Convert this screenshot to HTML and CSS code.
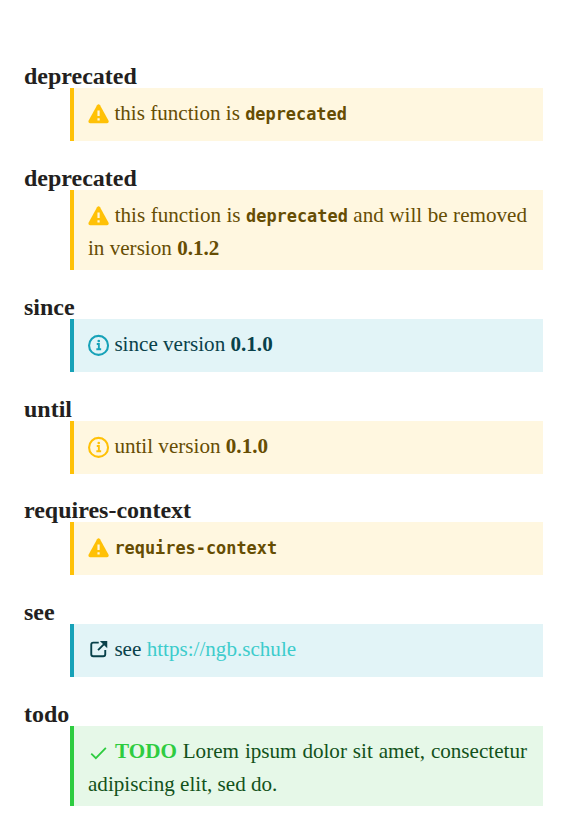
FILE: index.html
```
<!DOCTYPE html>
<html lang="en">
<head>
<meta charset="utf-8">
<title>Tags</title>
<link rel="stylesheet" href="styles.css">
</head>
<body>
<svg class="defs" width="0" height="0">
  <symbol id="warn" viewBox="0 0 21 36"><path d="M9 8.1Q10.5 6 12 8.1L20.4 23.4Q21.2 25.7 19 26H2Q-.2 25.7.6 23.4Z" fill="currentColor"/><path d="M10.5 13.2v5.6M10.5 21v2.2" stroke="#fff7e0" stroke-width="2.2"/></symbol>
  <symbol id="info" viewBox="0 0 21 36"><circle cx="10.5" cy="17.2" r="9.5" fill="none" stroke="currentColor" stroke-width="2.1"/><path d="M8.7 15.8h2.1v5.2M8.3 21.1h4.8" fill="none" stroke="currentColor" stroke-width="1.9"/><circle cx="10.7" cy="12.8" r="1.3" fill="currentColor"/></symbol>
  <symbol id="external" viewBox="0 0 21 36"><path d="M10.7 9.4H5.2Q3.2 9.4 3.2 11.4V21Q3.2 23 5.2 23H15.2Q17.2 23 17.2 21V16.8M10 17l7-7" fill="none" stroke="currentColor" stroke-width="1.9"/><path d="M11.8 7.9h7.4v7.2z" fill="currentColor"/></symbol>
  <symbol id="check" viewBox="0 0 21 36"><path d="M3.2 18.5l4.6 4.5L17.8 12.7" fill="none" stroke="currentColor" stroke-width="1.8"/></symbol>
</svg>
<dl class="tags">
  <dt>deprecated</dt>
  <dd class="warning"><svg class="icon"><use href="#warn"/></svg> this function is <code>deprecated</code></dd>
  <dt>deprecated</dt>
  <dd class="warning"><svg class="icon"><use href="#warn"/></svg> this function is <code>deprecated</code> and will be removed in version <b>0.1.2</b></dd>
  <dt>since</dt>
  <dd class="note"><svg class="icon"><use href="#info"/></svg> since version <b>0.1.0</b></dd>
  <dt>until</dt>
  <dd class="warning"><svg class="icon"><use href="#info"/></svg> until version <b>0.1.0</b></dd>
  <dt>requires-context</dt>
  <dd class="warning"><svg class="icon"><use href="#warn"/></svg> <code>requires-context</code></dd>
  <dt>see</dt>
  <dd class="note"><svg class="icon dark"><use href="#external"/></svg> see <a>https://ngb.schule</a></dd>
  <dt>todo</dt>
  <dd class="success"><svg class="icon"><use href="#check"/></svg> <b class="label">TODO</b> Lorem ipsum dolor sit amet, consectetur adipiscing elit, sed do.</dd>
</dl>
</body>
</html>
```
FILE: styles.css
```
body {
  margin: 0;
  background: #fff;
  font: 21.12px/28px "Liberation Serif", serif;
}
.defs { position: absolute; }
.tags { margin: 0; padding: 60px 24px 0; }
dt {
  height: 28px;
  line-height: 33px;
  font-size: 24px;
  font-weight: bold;
  color: #231f20;
}
dd {
  margin: 0 0 20.8px 46px;
  padding: 8px 16px 8.8px 14px;
  border-left: 4px solid var(--accent);
  text-align: justify;
}
.warning { --accent: #ffc107; background: #fff7e0; color: #664d03; }
.note { --accent: #17a2b8; background: #e2f4f7; color: #09414a; }
.success { --accent: #2ecc40; background: #e6f8e8; color: #12521a; }
.icon {
  width: 21.12px;
  height: 36px;
  vertical-align: -12px;
  color: var(--accent);
  overflow: visible;
}
.icon use { transform: translateY(1.2px); }
.dark { color: inherit; }
.label { color: var(--accent); }
code {
  font: bold 16.9px/1 "DejaVu Sans Mono", monospace;
}
a { color: #3dcccc; }
```
